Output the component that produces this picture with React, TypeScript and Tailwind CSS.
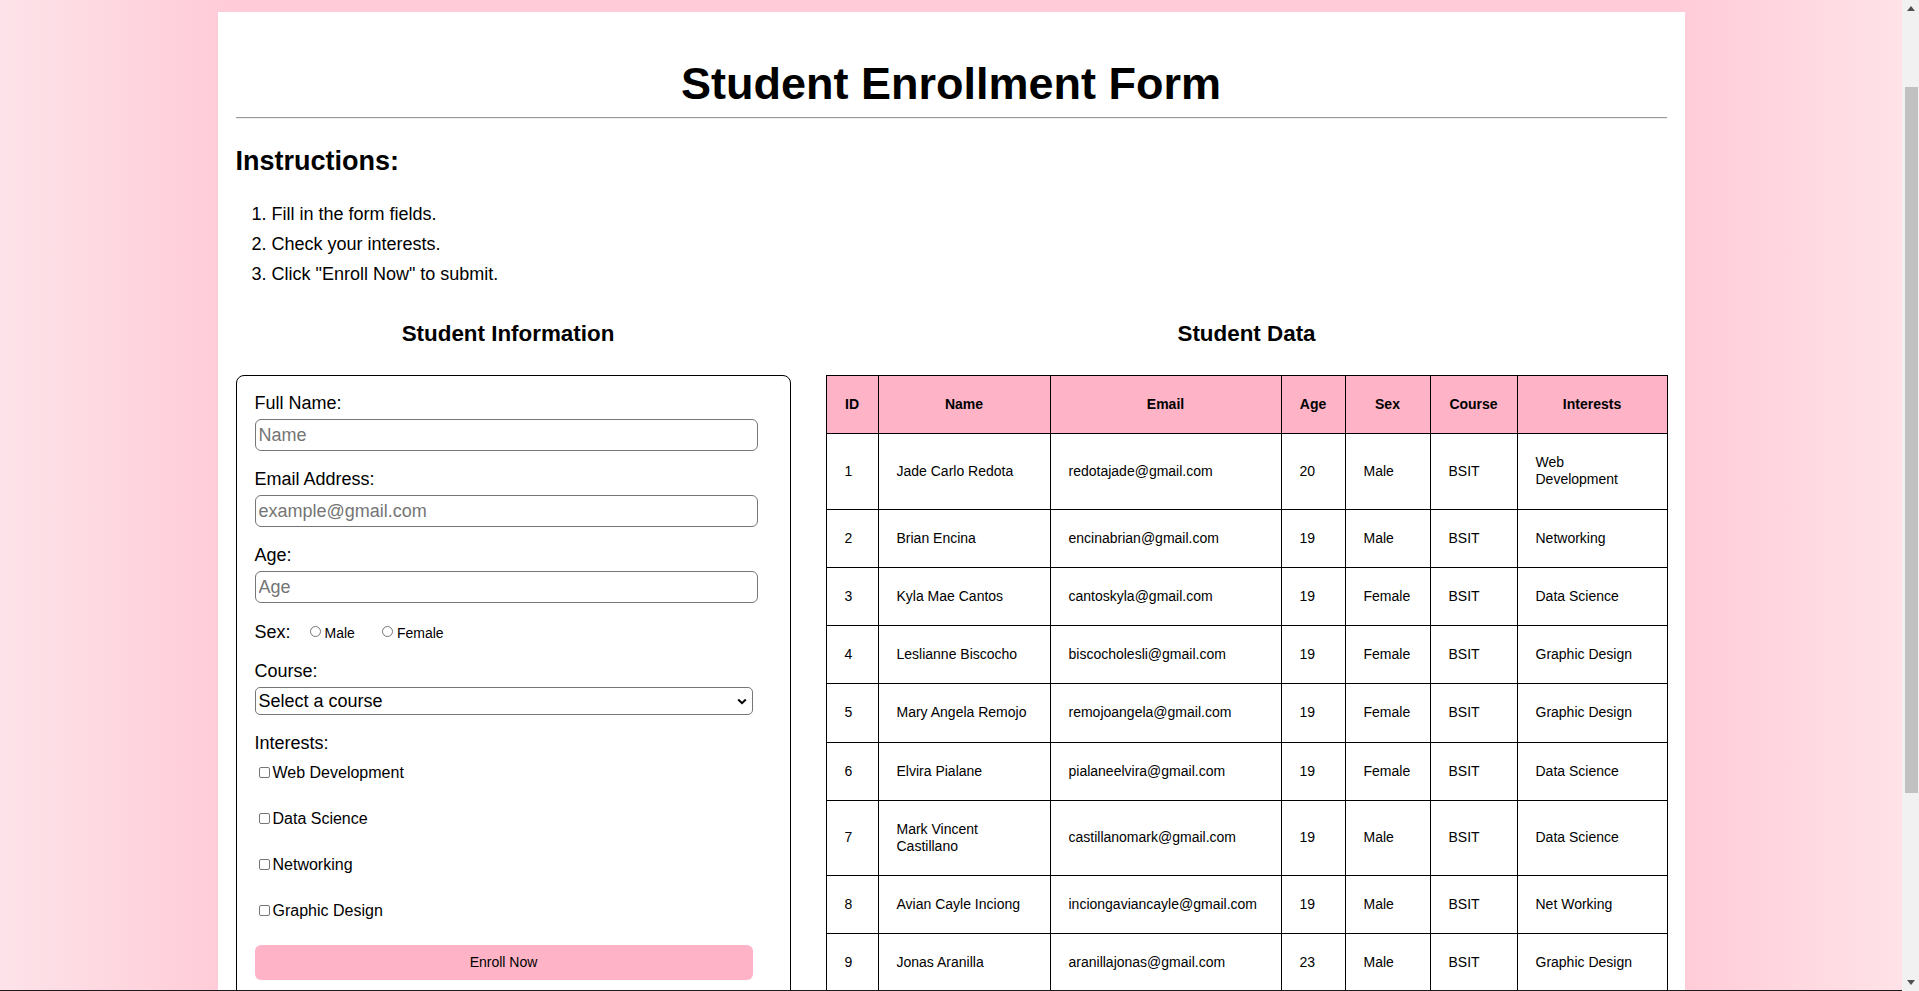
import React from 'react';

type Student = {
  id: number;
  name: string;
  email: string;
  age: number;
  sex: string;
  course: string;
  interests: string;
};

const students: Student[] = [
  { id: 1, name: 'Jade Carlo Redota', email: 'redotajade@gmail.com', age: 20, sex: 'Male', course: 'BSIT', interests: 'Web Development' },
  { id: 2, name: 'Brian Encina', email: 'encinabrian@gmail.com', age: 19, sex: 'Male', course: 'BSIT', interests: 'Networking' },
  { id: 3, name: 'Kyla Mae Cantos', email: 'cantoskyla@gmail.com', age: 19, sex: 'Female', course: 'BSIT', interests: 'Data Science' },
  { id: 4, name: 'Leslianne Biscocho', email: 'biscocholesli@gmail.com', age: 19, sex: 'Female', course: 'BSIT', interests: 'Graphic Design' },
  { id: 5, name: 'Mary Angela Remojo', email: 'remojoangela@gmail.com', age: 19, sex: 'Female', course: 'BSIT', interests: 'Graphic Design' },
  { id: 6, name: 'Elvira Pialane', email: 'pialaneelvira@gmail.com', age: 19, sex: 'Female', course: 'BSIT', interests: 'Data Science' },
  { id: 7, name: 'Mark Vincent Castillano', email: 'castillanomark@gmail.com', age: 19, sex: 'Male', course: 'BSIT', interests: 'Data Science' },
  { id: 8, name: 'Avian Cayle Inciong', email: 'inciongaviancayle@gmail.com', age: 19, sex: 'Male', course: 'BSIT', interests: 'Net Working' },
  { id: 9, name: 'Jonas Aranilla', email: 'aranillajonas@gmail.com', age: 23, sex: 'Male', course: 'BSIT', interests: 'Graphic Design' },
];

const interestOptions = ['Web Development', 'Data Science', 'Networking', 'Graphic Design'];

const headers = ['ID', 'Name', 'Email', 'Age', 'Sex', 'Course', 'Interests'];

const TextField = ({ label, placeholder }: { label: string; placeholder: string }) => (
  <div className="mb-[18px]">
    <label className="mb-[5px] block text-[18px] leading-[21px]">{label}</label>
    <input
      type="text"
      placeholder={placeholder}
      className="box-border block h-[32px] w-[503px] rounded-[6px] border border-[#767676] bg-white px-[3px] text-[18px] text-black placeholder:text-[#757575]"
    />
  </div>
);

const StudentForm = () => (
  <div className="rounded-[8px] border border-black px-[18px] pb-[18px] pt-[17px]">
    <TextField label="Full Name:" placeholder="Name" />
    <TextField label="Email Address:" placeholder="example@gmail.com" />
    <TextField label="Age:" placeholder="Age" />

    {/* Sex */}
    <div className="mb-[17px] flex items-baseline pt-[1px] leading-[21px]">
      <span className="text-[18px]">Sex:</span>
      <label className="ml-[19px] text-[14px]">
        <span className="mr-[4px] inline-block h-[11px] w-[11px] rounded-full border border-[#767676] bg-white align-[1px]" />
        Male
      </label>
      <label className="ml-[27px] text-[14px]">
        <span className="mr-[4px] inline-block h-[11px] w-[11px] rounded-full border border-[#767676] bg-white align-[1px]" />
        Female
      </label>
    </div>

    {/* Course */}
    <div className="mb-[18px]">
      <label className="mb-[5px] block text-[18px] leading-[21px]">Course:</label>
      <div className="box-border flex h-[28px] w-[498px] items-center justify-between rounded-[5px] border border-[#767676] bg-white pl-[3px] pr-[5px] text-[18px]">
        <span>Select a course</span>
        <svg width="10" height="7" viewBox="0 0 10 7" fill="none">
          <path d="M1.2 1.5 5 5.2 8.8 1.5" stroke="#000" strokeWidth="2" />
        </svg>
      </div>
    </div>

    {/* Interests */}
    <label className="block text-[18px] leading-[21px]">Interests:</label>
    <div className="mt-[10px] flex flex-col gap-[28px]">
      {interestOptions.map((opt) => (
        <div key={opt} className="text-[16px] leading-[18px]">
          <span className="ml-[4px] mr-[3px] inline-block h-[11px] w-[11px] rounded-[2px] border border-[#767676] bg-white align-baseline" />
          {opt}
        </div>
      ))}
    </div>

    <button className="mt-[25px] block h-[35px] w-[498px] rounded-[6px] bg-[#ffb3c6] text-[14px] text-black">
      Enroll Now
    </button>
  </div>
);

const StudentTable = () => (
  <table className="w-full table-fixed border-collapse border border-black text-[14px] leading-[17px]">
    <colgroup>
      <col className="w-[52px]" />
      <col className="w-[172px]" />
      <col className="w-[231px]" />
      <col className="w-[64px]" />
      <col className="w-[85px]" />
      <col className="w-[87px]" />
      <col className="w-[150px]" />
    </colgroup>
    <thead>
      <tr className="bg-[#ffb3c6]">
        {headers.map((h) => (
          <th key={h} className="border border-black px-[18px] py-[20.125px] text-center font-bold">
            {h}
          </th>
        ))}
      </tr>
    </thead>
    <tbody>
      {students.map((s) => (
        <tr key={s.id}>
          <td className="border border-black px-[18px] py-[20.125px]">{s.id}</td>
          <td className="border border-black px-[18px] py-[20.125px]">{s.name}</td>
          <td className="border border-black px-[18px] py-[20.125px]">{s.email}</td>
          <td className="border border-black px-[18px] py-[20.125px]">{s.age}</td>
          <td className="border border-black px-[18px] py-[20.125px]">{s.sex}</td>
          <td className="border border-black px-[18px] py-[20.125px]">{s.course}</td>
          <td className="border border-black px-[18px] py-[20.125px]">{s.interests}</td>
        </tr>
      ))}
    </tbody>
  </table>
);

const Scrollbar = () => (
  <div className="flex w-[17px] shrink-0 flex-col bg-[#f1f1f1]">
    <div className="flex h-[17px] items-center justify-center">
      <svg width="8" height="5" viewBox="0 0 8 5">
        <path d="M4 0 8 5H0z" fill="#505050" />
      </svg>
    </div>
    <div className="flex-1">
      <div className="ml-[3px] mt-[70px] h-[706px] w-[13px] bg-[#c1c1c1]" />
    </div>
    <div className="flex h-[17px] items-center justify-center">
      <svg width="8" height="5" viewBox="0 0 8 5">
        <path d="M0 0h8L4 5z" fill="#505050" />
      </svg>
    </div>
  </div>
);

const App: React.FC = () => {
  return (
    <div className="flex h-[991px] w-full overflow-hidden font-['Liberation_Sans',Arial,sans-serif] text-black">
      <div className="flex min-w-0 flex-1 flex-col">
        <div className="flex-1 overflow-hidden bg-[linear-gradient(to_right,#fde3e9_0%,#ffcbd8_12%,#ffcbd8_88%,#ffe2e8_100%)]">
          <div className="mx-auto mt-[12px] w-[1467px] bg-white px-[18px] pb-[40px] pt-[46px]">
            {/* Title */}
            <h1 className="text-center text-[45px] font-bold leading-[52px]">Student Enrollment Form</h1>
            <div className="mt-[7px] h-0 border-b border-t border-b-[#eeeeee] border-t-[#9a9a9a]" />

            {/* Instructions */}
            <h2 className="mt-[27px] text-[27px] font-bold leading-[31px]">Instructions:</h2>
            <ol className="mt-[22px] list-decimal pl-[36px] text-[18px] leading-[30px]">
              <li>Fill in the form fields.</li>
              <li>Check your interests.</li>
              <li>Click "Enroll Now" to submit.</li>
            </ol>

            {/* Form + Data */}
            <div className="mt-[32px] grid grid-cols-[555px_1fr] items-start gap-[35px]">
              <div>
                <h3 className="pr-[10px] text-center text-[22.4px] font-bold leading-[25px]">Student Information</h3>
                <div className="mt-[29px]">
                  <StudentForm />
                </div>
              </div>
              <div>
                <h3 className="text-center text-[22.4px] font-bold leading-[25px]">Student Data</h3>
                <div className="mt-[29px]">
                  <StudentTable />
                </div>
              </div>
            </div>
          </div>
        </div>
        <div className="h-px bg-[#1a1a1a]" />
      </div>
      <Scrollbar />
    </div>
  );
};

export default App;
